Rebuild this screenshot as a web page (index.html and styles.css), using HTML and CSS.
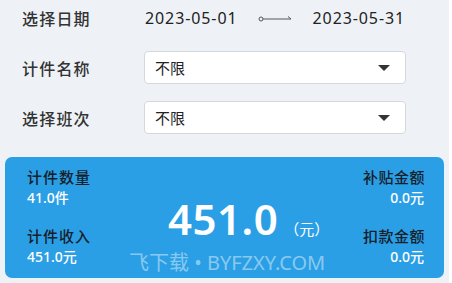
FILE: index.html
```html
<!DOCTYPE html>
<html lang="zh">
<head>
<meta charset="utf-8">
<link rel="stylesheet" href="styles.css">
</head>
<body>
<div class="page">
  <div class="row row-date">
    <div class="label">选择日期</div>
    <div class="dates">
      <span class="date">2023-05-01</span>
      <svg class="arrow" width="34" height="8" viewBox="0 0 34 8">
        <circle cx="3" cy="5" r="2" fill="none" stroke="#555" stroke-width="1"/>
        <line x1="5" y1="5" x2="33" y2="5" stroke="#555" stroke-width="1"/>
        <line x1="33" y1="5" x2="30" y2="2.5" stroke="#555" stroke-width="1"/>
      </svg>
      <span class="date">2023-05-31</span>
    </div>
  </div>
  <div class="row row-select first">
    <div class="label">计件名称</div>
    <div class="select"><span>不限</span><span class="caret"></span></div>
  </div>
  <div class="row row-select second">
    <div class="label">选择班次</div>
    <div class="select"><span>不限</span><span class="caret"></span></div>
  </div>
  <div class="card">
    <div class="col left">
      <div class="item">
        <div class="k">计件数量</div>
        <div class="v">41.0件</div>
      </div>
      <div class="item">
        <div class="k">计件收入</div>
        <div class="v">451.0元</div>
      </div>
    </div>
    <div class="center">
      <span class="big">451.0</span><span class="unit">（元）</span>
    </div>
    <div class="col right">
      <div class="item">
        <div class="k">补贴金额</div>
        <div class="v">0.0元</div>
      </div>
      <div class="item">
        <div class="k">扣款金额</div>
        <div class="v">0.0元</div>
      </div>
    </div>
    <div class="watermark">飞下载 • BYFZXY.COM</div>
  </div>
</div>
</body>
</html>
```

FILE: styles.css
```css
* { box-sizing: border-box; }
html, body { margin: 0; padding: 0; background: #ffffff; }
body { font-family: "Noto Sans", "Noto Sans CJK SC", sans-serif; }
.page {
  width: 449px;
  height: 283px;
  background: #eef2f7;
  display: flex;
  flex-direction: column;
  overflow: hidden;
}
.row { display: flex; align-items: center; }
.label {
  width: 144px;
  padding-left: 22px;
  font-size: 16px;
  font-weight: 500;
  letter-spacing: 1.2px;
  color: #333;
  font-family: "Noto Sans CJK SC", sans-serif;
}
.row-date { height: 36px; }
.dates { display: flex; align-items: center; padding-left: 1px; }
.date { font-size: 16px; color: #222; letter-spacing: 0.9px; }
.arrow { margin: 0 21px 0 20px; }
.row-select { height: 33px; }
.row-select.first { margin-top: 15px; }
.row-select.second { margin-top: 17px; }
.select {
  width: 262px;
  height: 33px;
  background: #fff;
  border: 1px solid #d4d8dd;
  border-radius: 4px;
  display: flex;
  align-items: center;
  justify-content: space-between;
  padding: 0 15px 0 10px;
  font-size: 15px;
  color: #222;
  font-family: "Noto Sans CJK SC", sans-serif;
}
.caret {
  width: 0; height: 0;
  border-left: 6px solid transparent;
  border-right: 6px solid transparent;
  border-top: 6px solid #333;
}
.card {
  position: relative;
  margin: 23px 0 0 5px;
  width: 439px;
  height: 121px;
  background: #2b9fe5;
  border-radius: 7px;
  display: flex;
  padding: 0 20px 0 22px;
  font-family: "Noto Sans CJK SC", sans-serif;
}
.col { display: flex; flex-direction: column; padding-top: 9px; gap: 17px; }
.item { display: flex; flex-direction: column; }
.k { font-size: 15px; font-weight: 500; letter-spacing: 1px; color: #15202b; line-height: 22px; }
.v { font-size: 14px; font-weight: 500; color: #fff; line-height: 20px; font-family: "Noto Sans", "Noto Sans CJK SC", sans-serif; }
.left { width: 141px; }
.right { margin-left: auto; align-items: flex-end; text-align: right; }
.right .k { letter-spacing: 0.5px; margin-right: -1px; }
.center {
  display: flex;
  align-items: baseline;
  padding-top: 33px;
  height: 80px;
}
.big {
  font-family: "Noto Sans", sans-serif;
  font-size: 42px;
  font-weight: 600;
  color: #fff;
  letter-spacing: 0.5px;
}
.unit { font-size: 15px; color: #fff; margin-left: 6px; }
.watermark {
  position: absolute;
  left: 124px;
  top: 90px;
  font-size: 20px;
  color: rgba(255,255,255,0.45);
  font-family: "Noto Sans", "Noto Sans CJK SC", sans-serif;
  white-space: nowrap;
}
```
